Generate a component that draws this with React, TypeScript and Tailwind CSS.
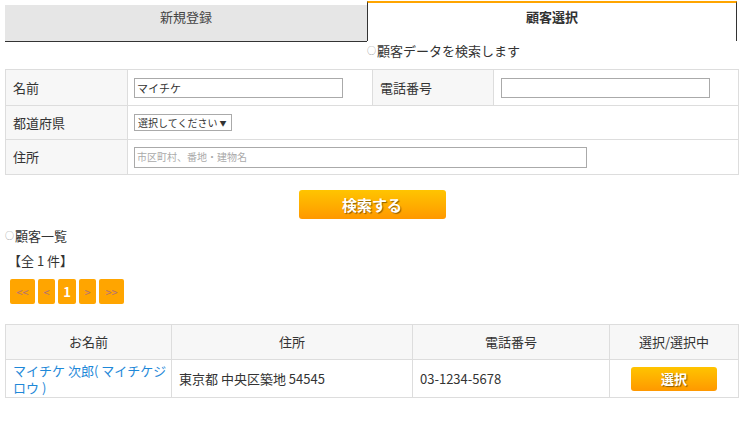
import React from 'react';

const font = { fontFamily: '"Noto Sans CJK JP", "Noto Sans", sans-serif' };

const orangeBtn =
  'bg-gradient-to-b from-[#ffc400] to-[#ff9800] text-white rounded-[3px] [text-shadow:1px_1px_1px_rgba(0,0,0,0.45)]';

const PageButton: React.FC<{ label: string; w: string; active?: boolean }> = ({ label, w, active }) => (
  <span
    className={`${w} h-[25px] flex items-center justify-center bg-[#ffa500] rounded-[2px] text-[11px] ${
      active ? 'text-white font-bold text-[13px]' : 'text-[#b0707a]'
    }`}
  >
    {label}
  </span>
);

export default function App() {
  return (
    <div className="w-[754px] h-[422px] bg-white text-[13px] text-[#333] leading-[18px]" style={font}>
      {/* tabs */}
      <div className="flex items-start pt-[1px] pl-[5px]">
        <div className="mt-[4px] w-[362px] h-[37px] bg-[#e6e6e6] border-b border-[#333] text-center pt-[3px] text-[#444]">
          新規登録
        </div>
        <div className="w-[370px] h-[40px] border-t-2 border-t-[#ffa500] border-l border-r border-[#333] text-center pt-[5px] font-bold">
          顧客選択
        </div>
      </div>
      <div className="ml-[367px] h-[18px] flex items-center">
        <span className="text-[#999] text-[9px] mr-[1px]">○</span>顧客データを検索します
      </div>

      {/* search form */}
      <table className="ml-[5px] mt-[9px] w-[734px] border-collapse border border-[#ddd]">
        <tbody>
          <tr className="h-[36px]">
            <td className="w-[122px] bg-[#f7f7f7] border border-[#ddd] pl-[7px]">名前</td>
            <td className="w-[245px] border border-[#ddd] pl-[6px]">
              <div className="w-[209px] h-[20px] border border-[#aaa] text-[11px] pl-[2px] flex items-center">マイチケ</div>
            </td>
            <td className="w-[121px] bg-[#f7f7f7] border border-[#ddd] pl-[7px]">電話番号</td>
            <td className="border border-[#ddd] pl-[7px]">
              <div className="w-[209px] h-[20px] border border-[#aaa]" />
            </td>
          </tr>
          <tr className="h-[34px]">
            <td className="bg-[#f7f7f7] border border-[#ddd] pl-[7px]">都道府県</td>
            <td colSpan={3} className="border border-[#ddd] pl-[6px]">
              <div className="w-[98px] h-[17px] border border-[#aaa] text-[10px] whitespace-nowrap flex items-center pl-[3px] gap-[2px]">
                選択してください<span className="text-[7px]">▼</span>
              </div>
            </td>
          </tr>
          <tr className="h-[35px]">
            <td className="bg-[#f7f7f7] border border-[#ddd] pl-[7px]">住所</td>
            <td colSpan={3} className="border border-[#ddd] pl-[6px]">
              <div className="w-[453px] h-[21px] border border-[#aaa] text-[10px] text-[#aaa] flex items-center pl-[2px]">
                市区町村、番地・建物名
              </div>
            </td>
          </tr>
        </tbody>
      </table>

      <div className="w-[744px] flex justify-center mt-[15px]">
        <button className={`${orangeBtn} w-[147px] h-[29px] text-[15px] font-bold`}>検索する</button>
      </div>

      <div className="ml-[5px] mt-[8px] h-[18px] flex items-center">
        <span className="text-[#999] text-[9px] mr-[1px]">○</span>顧客一覧
      </div>
      <div className="ml-[8px] mt-[7px] h-[18px] flex items-center">【全 1 件】</div>

      <div className="ml-[10px] mt-[9px] flex gap-[3px]">
        <PageButton label="<<" w="w-[25px]" />
        <PageButton label="<" w="w-[17px]" />
        <PageButton label="1" w="w-[18px]" active />
        <PageButton label=">" w="w-[17px]" />
        <PageButton label=">>" w="w-[25px]" />
      </div>

      {/* results */}
      <table className="ml-[5px] mt-[20px] w-[734px] border-collapse border border-[#ddd]">
        <thead>
          <tr className="h-[35px] bg-[#f7f7f7]">
            <th className="w-[166px] border border-[#ddd] font-normal">お名前</th>
            <th className="w-[241px] border border-[#ddd] font-normal">住所</th>
            <th className="w-[197px] border border-[#ddd] font-normal">電話番号</th>
            <th className="border border-[#ddd] font-normal">選択/選択中</th>
          </tr>
        </thead>
        <tbody>
          <tr className="h-[38px]">
            <td className="border border-[#ddd] pl-[7px] pr-[4px] text-[#1e88d8] leading-[17px]">
              マイチケ 次郎( マイチケジロウ )
            </td>
            <td className="border border-[#ddd] px-[7px]">東京都 中央区築地 54545</td>
            <td className="border border-[#ddd] px-[7px]">03-1234-5678</td>
            <td className="border border-[#ddd] text-center">
              <button className={`${orangeBtn} w-[86px] h-[24px] text-[13px] font-bold`}>選択</button>
            </td>
          </tr>
        </tbody>
      </table>
    </div>
  );
}
